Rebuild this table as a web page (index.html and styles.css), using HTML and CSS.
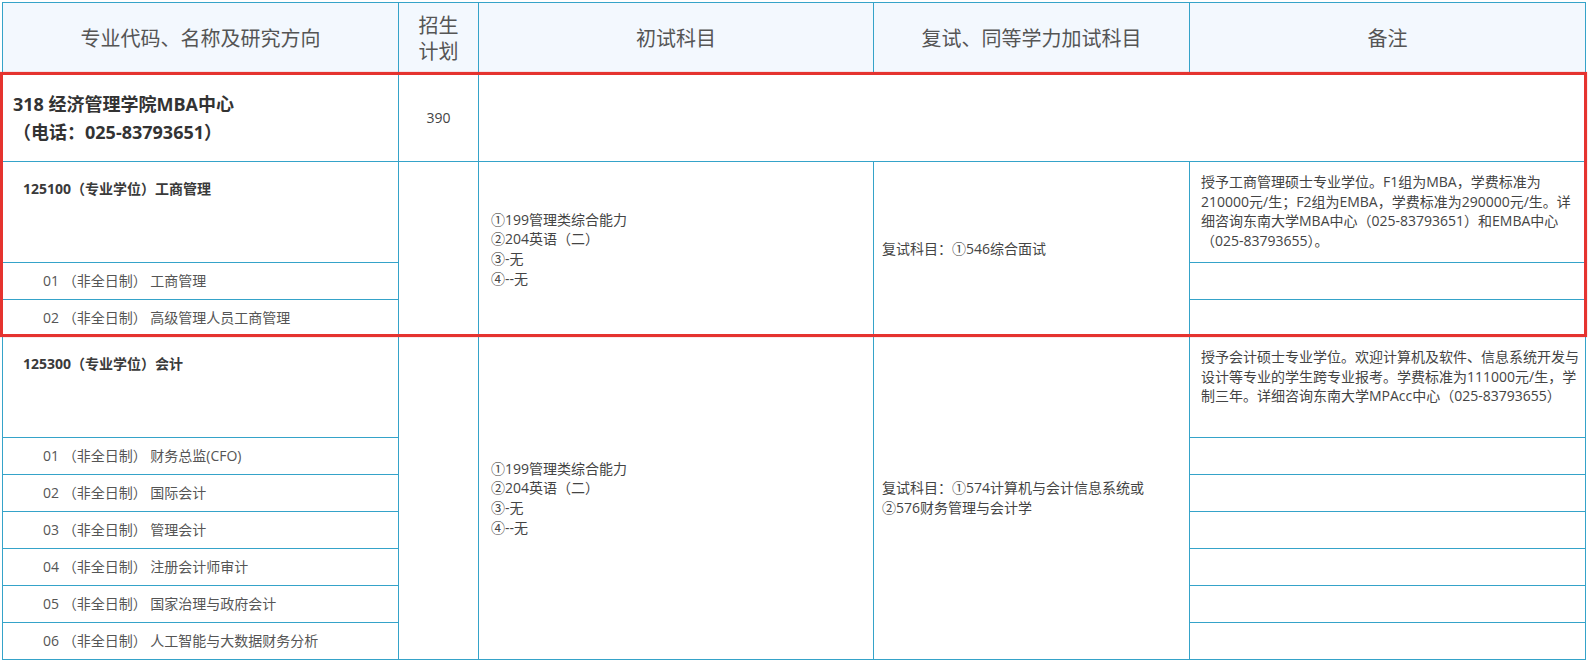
FILE: index.html
```html
<!DOCTYPE html>
<html lang="zh-CN">
<head>
<meta charset="utf-8">
<title>专业目录</title>
<link rel="stylesheet" href="styles.css">
</head>
<body>
<div class="page">
  <table class="plan">
    <colgroup>
      <col class="c1"><col class="c2"><col class="c3"><col class="c4"><col class="c5">
    </colgroup>
    <thead>
      <tr class="r-head">
        <th>专业代码、名称及研究方向</th>
        <th>招生<br>计划</th>
        <th>初试科目</th>
        <th>复试、同等学力加试科目</th>
        <th>备注</th>
      </tr>
    </thead>
    <tbody>
      <tr class="r-dept">
        <td class="dept">318 经济管理学院MBA中心<br>（电话：025-83793651）</td>
        <td class="num">390</td>
        <td colspan="3"></td>
      </tr>
      <tr class="r-major">
        <td class="major">125100（专业学位）工商管理</td>
        <td rowspan="3"></td>
        <td rowspan="3" class="exam">①199管理类综合能力<br>②204英语（二）<br>③-无<br>④--无</td>
        <td rowspan="3" class="retest">复试科目：①546综合面试</td>
        <td class="note">授予工商管理硕士专业学位。F1组为MBA，学费标准为<br>210000元/生；F2组为EMBA，学费标准为290000元/生。详<br>细咨询东南大学MBA中心（025-83793651）和EMBA中心<br>（025-83793655）。</td>
      </tr>
      <tr class="r-dir"><td class="dir">01 （非全日制） 工商管理</td><td></td></tr>
      <tr class="r-dir"><td class="dir">02 （非全日制） 高级管理人员工商管理</td><td></td></tr>
      <tr class="r-major">
        <td class="major">125300（专业学位）会计</td>
        <td rowspan="7"></td>
        <td rowspan="7" class="exam">①199管理类综合能力<br>②204英语（二）<br>③-无<br>④--无</td>
        <td rowspan="7" class="retest">复试科目：①574计算机与会计信息系统或<br>②576财务管理与会计学</td>
        <td class="note">授予会计硕士专业学位。欢迎计算机及软件、信息系统开发与<br>设计等专业的学生跨专业报考。学费标准为111000元/生，学<br>制三年。详细咨询东南大学MPAcc中心（025-83793655）</td>
      </tr>
      <tr class="r-dir"><td class="dir">01 （非全日制） 财务总监(CFO)</td><td></td></tr>
      <tr class="r-dir"><td class="dir">02 （非全日制） 国际会计</td><td></td></tr>
      <tr class="r-dir"><td class="dir">03 （非全日制） 管理会计</td><td></td></tr>
      <tr class="r-dir"><td class="dir">04 （非全日制） 注册会计师审计</td><td></td></tr>
      <tr class="r-dir"><td class="dir">05 （非全日制） 国家治理与政府会计</td><td></td></tr>
      <tr class="r-dir"><td class="dir">06 （非全日制） 人工智能与大数据财务分析</td><td></td></tr>
    </tbody>
  </table>
  <div class="highlight"></div>
</div>
</body>
</html>
```

FILE: styles.css
```css
html, body {
  margin: 0;
  padding: 0;
  background: #ffffff;
}

body {
  font-family: "Open Sans", "Noto Sans CJK SC", sans-serif;
  font-size: 14px;
  color: #444444;
}

.page {
  position: relative;
  padding: 2px 0 0 2px;
  width: 1587px;
}

.plan {
  border-collapse: collapse;
  table-layout: fixed;
  width: 1583px;
}

.c1 { width: 396px; }
.c2 { width: 80px; }
.c3 { width: 395px; }
.c4 { width: 316px; }
.c5 { width: 396px; }

.plan th,
.plan td {
  border: 1px solid #35a3c9;
  padding: 0;
  line-height: 19.6px;
  vertical-align: middle;
  text-align: left;
}

.plan th {
  background: #f3f8fe;
  font-weight: normal;
  font-size: 20px;
  line-height: 26px;
  color: #555555;
  text-align: center;
  font-family: "Noto Sans CJK SC", sans-serif;
}

.r-head { height: 71px; }
.r-dept { height: 88px; }
.r-major { height: 101px; }
.r-dir { height: 37px; }

.plan .dept {
  font-size: 18px;
  font-weight: bold;
  line-height: 28px;
  color: #333333;
  padding: 0 10px 0 10px;
}

.plan .num {
  text-align: center;
  color: #444444;
}

.plan .major {
  vertical-align: top;
  font-weight: bold;
  color: #3a3a3a;
  padding: 17px 10px 0 20px;
}

.plan .dir {
  color: #555555;
  padding: 0 10px 0 40px;
  white-space: nowrap;
}

.plan .exam {
  padding: 0 10px 0 12px;
  color: #444444;
}

.plan .retest {
  padding: 0 8px 0 8px;
  color: #444444;
}

.plan .note {
  vertical-align: top;
  padding: 10px 4px 0 11px;
  color: #444444;
}

.highlight {
  position: absolute;
  left: 0;
  top: 72px;
  width: 1587px;
  height: 265px;
  box-sizing: border-box;
  border: 3px solid #e5332f;
  box-shadow: 0 0 1px rgba(229, 51, 47, 0.6);
  pointer-events: none;
}
```
